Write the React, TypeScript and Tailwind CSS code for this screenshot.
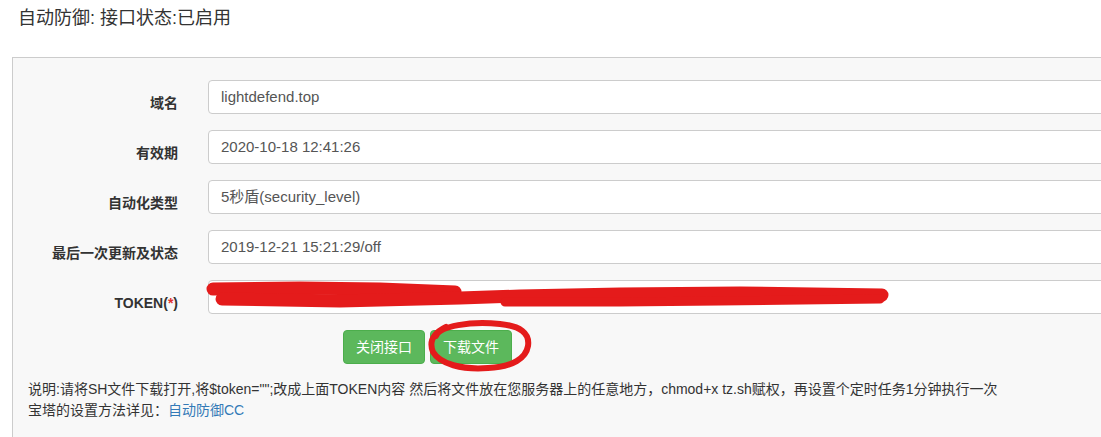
import React from 'react'

const rows = [
  { label: '域名', value: 'lightdefend.top' },
  { label: '有效期', value: '2020-10-18 12:41:26' },
  { label: '自动化类型', value: '5秒盾(security_level)' },
  { label: '最后一次更新及状态', value: '2019-12-21 15:21:29/off' },
]

export default function App() {
  return (
    <div
      className="relative h-[437px] w-[1101px] overflow-hidden bg-white text-[#333]"
      style={{ fontFamily: '"Liberation Sans", Arial, "Noto Sans CJK SC", sans-serif' }}
    >
      <h3 className="pl-[18px] pt-[3px] text-[18px] leading-[30px] font-normal text-[#333]">
        自动防御: 接口状态:已启用
      </h3>

      <div className="mt-[24px] ml-[12px] w-[1120px] h-[400px] border-l border-t border-[#cccccc] bg-[#f8f8f8] pt-[22px]">
        {rows.map((r) => (
          <div key={r.label} className="mb-[16px] flex h-[34px]">
            <label className="w-[165px] pt-[13px] text-right text-[14px] leading-[20px] font-bold text-[#333]">
              {r.label}
            </label>
            <div className="ml-[30px] flex h-[34px] w-[910px] items-center rounded-[4px] border border-[#cccccc] bg-white pl-[12px] text-[15px] text-[#555]">
              {r.value}
            </div>
          </div>
        ))}

        <div className="mb-[16px] flex h-[34px]">
          <label className="w-[165px] pt-[13px] text-right text-[14px] leading-[20px] font-bold text-[#333]">
            TOKEN(<span className="text-[#e0312f]">*</span>)
          </label>
          <div className="ml-[30px] h-[34px] w-[910px] rounded-[4px] border border-[#cccccc] bg-white" />
        </div>

        <div className="flex pl-[330px]">
          <button className="h-[34px] rounded-[4px] border border-[#4cae4c] bg-[#5cb85c] px-[12px] text-[14px] text-white">
            关闭接口
          </button>
          <button className="ml-[5px] h-[34px] rounded-[4px] border border-[#4cae4c] bg-[#5cb85c] px-[12px] text-[14px] text-white">
            下载文件
          </button>
        </div>

        <div className="mt-[15px] pl-[15px] text-[14px] leading-[21px] text-[#333]">
          <p>
            说明:请将SH文件下载打开,将$token="";改成上面TOKEN内容 然后将文件放在您服务器上的任意地方，chmod+x tz.sh赋权，再设置个定时任务1分钟执行一次
          </p>
          <p>
            宝塔的设置方法详见：<a className="text-[#337ab7]">自动防御CC</a>
          </p>
        </div>
      </div>

      <svg className="pointer-events-none absolute left-0 top-0" width="1101" height="437">
        <g fill="none" stroke="#e41b1b" strokeLinecap="round" strokeLinejoin="round">
          <path d="M213 289 L300 288 L380 289 L455 292" strokeWidth="13" />
          <path d="M222 299 L340 301 L460 298 L520 296 L620 294 L740 293 L882 295" strokeWidth="13" />
          <path d="M505 302 L620 302 L720 301 L880 299" strokeWidth="9" />
          <path
            d="M436 336 C440 326 470 321 500 324 C520 326 530 333 528 346 C526 358 513 367 488 368 C462 370 440 364 433 352 C429 342 432 334 446 327"
            strokeWidth="6"
          />
        </g>
      </svg>
    </div>
  )
}
